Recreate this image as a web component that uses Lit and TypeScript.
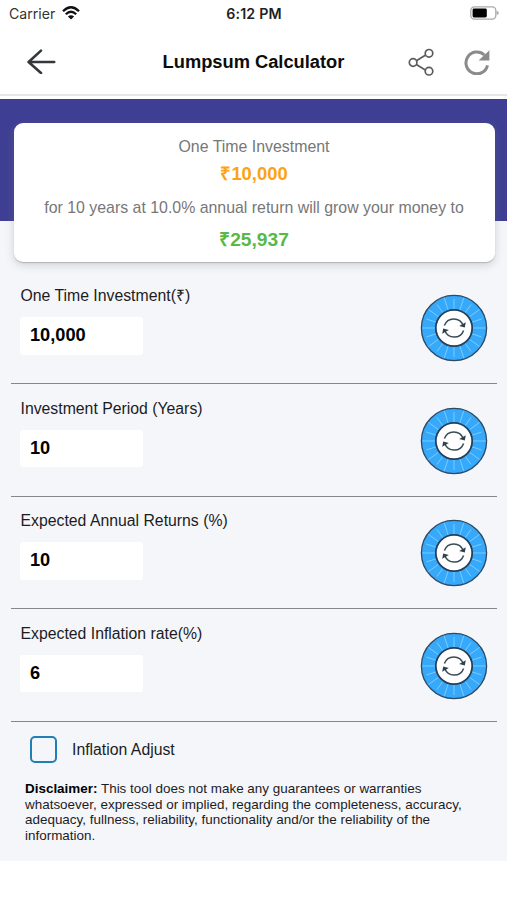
import { LitElement, html, svg, css } from "lit";
import { customElement, property } from "lit/decorators.js";

const FONT = css`"Liberation Sans", Arial, sans-serif`;

@customElement("spin-dial")
class SpinDial extends LitElement {
  static styles = css`
    :host { display: block; width: 68px; height: 68px; }
    svg { display: block; }
  `;
  render() {
    const spokes = Array.from({ length: 20 }, (_, i) => {
      const a = (i * Math.PI) / 10;
      const r = i % 2 ? 29 : 31.5;
      return svg`<line x1=${34 + 19 * Math.cos(a)} y1=${34 + 19 * Math.sin(a)}
        x2=${34 + r * Math.cos(a)} y2=${34 + r * Math.sin(a)} />`;
    });
    return html`<svg width="68" height="68" viewBox="0 0 68 68" fill="none">
      <circle cx="34" cy="34" r="32.6" fill="#36a9fb" stroke="#2b4a66" stroke-width="1.3" />
      <g stroke="#7fcaff" stroke-width="1">${spokes}</g>
      <circle cx="34" cy="34" r="18.2" fill="#fff" stroke="#24405a" stroke-width="1.8" />
      <g stroke="#3a4c57" stroke-width="1.5">
        <path d="M24.4 31.6A10 10 0 0 1 43.2 31.4" />
        <path d="M43.6 36.4A10 10 0 0 1 24.8 36.6" />
      </g>
      <path d="M39.2 32L44.8 33.6L45.8 28.2Z" fill="#2c414d" />
      <path d="M28.8 36L23.2 34.4L22.2 39.8Z" fill="#2c414d" />
    </svg>`;
  }
}

@customElement("calc-row")
class CalcRow extends LitElement {
  @property() label = "";
  @property() value = "";
  static styles = css`
    :host {
      display: flex; justify-content: space-between; box-sizing: border-box;
      height: 112.5px; margin: 0 10px 0 11px; padding: 13.3px 9px 0 9px;
      border-bottom: 1px solid #85878b; font-family: ${FONT};
    }
    .label { height: 19px; padding-top: 1px; line-height: 20px; font-size: 15.8px; color: #1c1c1e; white-space: nowrap; padding-left: 0.5px; }
    .field {
      box-sizing: border-box; width: 123px; height: 37.5px; margin-top: 12px; padding-left: 10px;
      line-height: 37px; border-radius: 3px; background: #fff; color: #000;
      font-size: 18.2px; font-weight: 700;
    }
    spin-dial { margin-top: 9px; }
  `;
  render() {
    return html`<div>
        <div class="label">${this.label}</div>
        <div class="field">${this.value}</div>
      </div>
      <spin-dial></spin-dial>`;
  }
}

@customElement("app-root")
class AppRoot extends LitElement {
  static styles = css`
    :host { display: block; height: 900px; overflow: hidden; background: #fff; font-family: ${FONT}; color: #111; }
    svg { display: block; }
    .status { display: grid; grid-template-columns: 1fr auto 1fr; align-items: center; height: 28px; box-sizing: border-box; padding: 0 8px 1px 9px; line-height: 20px; }
    .carrier { display: flex; gap: 7px; align-items: center; font: 14.1px/20px Inter, sans-serif; color: #333; }
    .carrier svg { margin-bottom: 1px; }
    .time { font: 600 14.2px/20px Inter, sans-serif; color: #222; letter-spacing: 0.2px; }
    .battery { justify-self: end; margin-bottom: 1px; }
    .header { display: grid; grid-template-columns: 1fr auto 1fr; align-items: center; height: 66px; box-sizing: border-box; padding: 0 17.5px; }
    .back { margin-left: 8.5px; }
    .title { margin: 0; padding-top: 1px; font-size: 18.3px; line-height: 24px; font-weight: 700; color: #0c0c0c; white-space: nowrap; }
    .actions { justify-self: end; display: flex; gap: 29px; align-items: center; }
    .rule { height: 2px; margin-bottom: 3px; background: #e6e6e6; }
    .body { height: 762px; background: linear-gradient(#3e3f94 122px, #f4f6fa 122px); overflow: hidden; }
    .card {
      box-sizing: border-box; height: 139px; margin: 24px 12.5px 0 13.5px; padding-top: 13px;
      border-radius: 9px; background: #fff; text-align: center; color: #777;
      box-shadow: 0 1px 1px rgba(0,0,0,.18), 0 3px 9px rgba(130,130,130,.32);
      white-space: nowrap;
    }
    .muted { font-size: 15.9px; line-height: 22px; }
    .amount { font-size: 18.4px; line-height: 24px; font-weight: 700; }
    .invested { margin: 4px 0 11px; color: #fca311; }
    .grown { margin-top: 9px; font-size: 19.2px; color: #57b947; }
    .rows { padding-top: 9.9px; }
    .adjust { display: flex; align-items: center; gap: 15px; height: 27px; margin: 14.6px 0 0 30px; font-size: 15.8px; color: #1c1c1e; }
    .adjust span:last-child { padding-top: 1px; }
    .box { box-sizing: border-box; width: 27px; height: 27px; border: 2px solid #1f80b5; border-radius: 5px; }
    .disclaimer { margin: 17.8px 0 0 25px; font-size: 13.44px; line-height: 15.4px; color: #1c1c1e; white-space: nowrap; }
    .disclaimer b { color: #000; }
  `;
  render() {
    return html`
      <div class="status">
        <div class="carrier"><span>Carrier</span>
          <svg width="18" height="14" viewBox="0 0 18 14" fill="none" stroke="#111" stroke-width="2.3">
            <path d="M1 5.2Q9-2.6 17 5.2" />
            <path d="M3.8 8.3Q9 3.2 14.2 8.3" />
            <path d="M9 13.6L5.9 10.5Q9 7.8 12.1 10.5Z" fill="#111" stroke="none" />
          </svg>
        </div>
        <div class="time">6:12 PM</div>
        <svg class="battery" width="30" height="14" viewBox="0 0 30 14">
          <rect x="1.8" y="0.8" width="25" height="12.4" rx="3.6" fill="#fff" stroke="#aaa" stroke-width="1.3" />
          <rect x="3.6" y="2.5" width="14.2" height="9" rx="1.4" fill="#000" />
          <path d="M27.6 4.8Q29.8 5.4 29.8 7Q29.8 8.6 27.6 9.2Z" fill="#aaa" />
        </svg>
      </div>
      <div class="header">
        <svg class="back" width="30" height="26" viewBox="0 0 30 26" fill="none" stroke="#34373b" stroke-width="2.6" stroke-linecap="round" stroke-linejoin="round">
          <path d="M28.2 14H3M15 2.6L2.6 14L15 25" />
        </svg>
        <h1 class="title">Lumpsum Calculator</h1>
        <div class="actions">
          <svg width="27" height="29" viewBox="0 0 27 29" fill="none" stroke="#5c5c5c" stroke-width="1.7">
            <path d="M8.4 13.7L17.3 8.2M8.4 17.5L17.3 22.9" />
            <circle cx="5.1" cy="15.5" r="3.8" /><circle cx="21" cy="6.3" r="3.8" /><circle cx="21" cy="24.2" r="3.8" />
          </svg>
          <svg width="26" height="27" viewBox="0 0 26 27" fill="none">
            <path d="M23.5 17.3A10.9 10.9 0 1 1 20.4 7" stroke="#8b8b8b" stroke-width="3" />
            <path d="M25.4 2.2V12.6H14.6Z" fill="#8b8b8b" />
          </svg>
        </div>
      </div>
      <div class="rule"></div>
      <div class="body">
        <div class="card">
          <div class="muted">One Time Investment</div>
          <div class="amount invested">₹10,000</div>
          <div class="muted">for 10 years at 10.0% annual return will grow your money to</div>
          <div class="amount grown">₹25,937</div>
        </div>
        <div class="rows">
          <calc-row label="One Time Investment(₹)" value="10,000"></calc-row>
          <calc-row label="Investment Period (Years)" value="10"></calc-row>
          <calc-row label="Expected Annual Returns (%)" value="10"></calc-row>
          <calc-row label="Expected Inflation rate(%)" value="6"></calc-row>
        </div>
        <div class="adjust"><span class="box"></span><span>Inflation Adjust</span></div>
        <div class="disclaimer">
          <b>Disclaimer:</b> This tool does not make any guarantees or warranties<br />whatsoever, expressed or implied, regarding the completeness, accuracy,<br />adequacy, fullness, reliability, functionality and/or the reliability of the<br />information.
        </div>
      </div>
    `;
  }
}
